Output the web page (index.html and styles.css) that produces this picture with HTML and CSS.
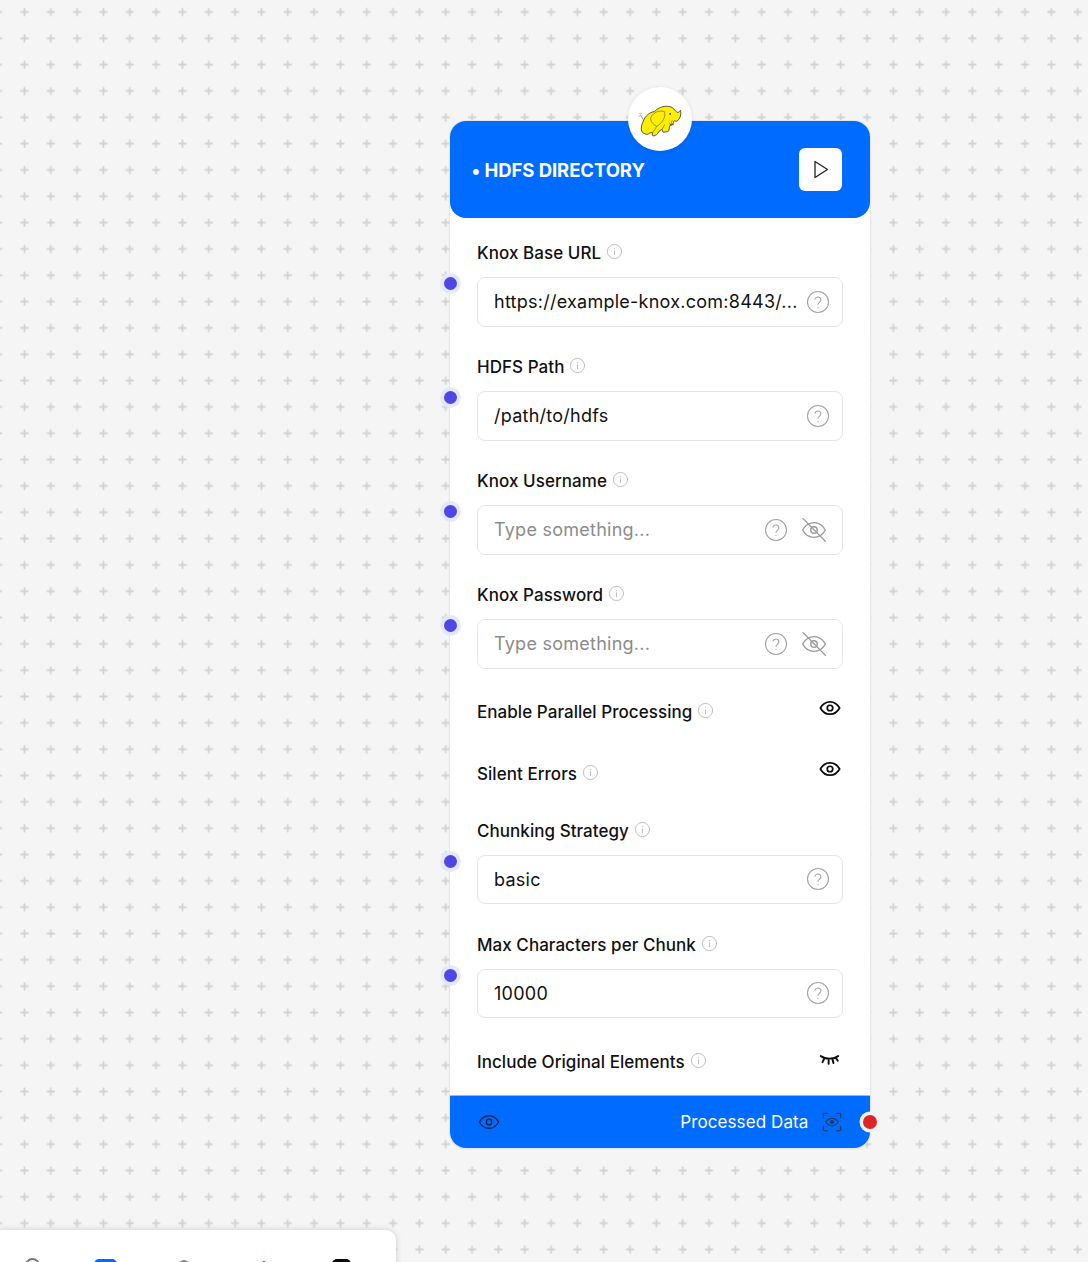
FILE: index.html
```html
<!DOCTYPE html>
<html lang="en">
<head>
<meta charset="utf-8">
<title>HDFS Directory</title>
<link rel="stylesheet" href="styles.css">
</head>
<body>
<svg class="defs" width="0" height="0" aria-hidden="true">
  <defs>
    <symbol id="i-info" viewBox="0 0 24 24"><circle cx="12" cy="12" r="10"/><path d="M12 16.500v-5.500"/><path d="M12 7.600v.2"/></symbol>
    <symbol id="i-help" viewBox="0 0 24 24"><circle cx="12" cy="12" r="10.500"/><path d="M9 9.200a3 3 0 0 1 5.900.9c0 2-2.900 2.500-2.900 4.200"/><path d="M12 17.600v.2"/></symbol>
    <symbol id="i-eye" viewBox="0 0 24 24"><path d="M1.500 12C4 7.500 7.600 5.200 12 5.200S20 7.500 22.500 12C20 16.500 16.400 18.800 12 18.800S4 16.500 1.500 12Z"/><circle cx="12" cy="12" r="3"/></symbol>
    <symbol id="i-eye-off" viewBox="0 0 24 24"><path d="M1.500 12C4 7.500 7.600 5.200 12 5.200S20 7.500 22.500 12C20 16.500 16.400 18.800 12 18.800S4 16.500 1.500 12Z"/><circle cx="12" cy="12" r="3"/><path d="M2 1.500 22.500 22.500"/></symbol>
    <symbol id="i-lash" viewBox="0 0 24 24"><path d="M2 8c5 4 15 4 20 0"/><path d="M6 11l-2 4"/><path d="M11 12.500V17"/><path d="M15.500 12l1 4"/><path d="M19.500 10.500l2 3"/></symbol>
    <symbol id="i-scan" viewBox="0 0 24 24"><path d="M1.500 7V3.500a2 2 0 0 1 2-2H7"/><path d="M17 1.500h3.500a2 2 0 0 1 2 2V7"/><path d="M22.500 17v3.500a2 2 0 0 1-2 2H17"/><path d="M7 22.500H3.500a2 2 0 0 1-2-2V17"/><path d="M4.500 12C6.500 9 9 7.500 12 7.500S17.500 9 19.500 12C17.500 15 15 16.500 12 16.500S6.500 15 4.500 12Z"/><circle class="fill-dark" cx="12" cy="12" r="1.800"/></symbol>
    <pattern id="plus" width="26.33" height="26.33" patternUnits="userSpaceOnUse" x="11.300" y="-1.200">
      <path class="plus-mark" d="M13.170 9.200v8M9.170 13.200h8"/>
    </pattern>
  </defs>
</svg>

<main class="canvas">
  <svg class="dots" width="1088" height="1262" aria-hidden="true"><rect width="1088" height="1262" fill="url(#plus)"/></svg>

  <article class="node">
    <div class="logo">
      <svg class="elephant" viewBox="85 65 130 100" aria-hidden="true">
        <path class="el-tail" d="M103 118C99 112 96 106 92 100M92 97l-3-1M95 96l-1-3M90 103l-3 1"/>
        <path class="el-body" d="M100 120C106 102 120 92 134 90C146 76 170 70 186 78C192 82 198 93 203 93C207 93 207 87 211 87C213 99 210 111 201 118C197 120 194 116 191 118C191 124 187 130 180 131C176 136 178 143 176 147C172 151 165 150 161 151C157 152 158 145 156 143C152 145 148 147 146 150C143 158 137 160 132 162C127 163 126 158 128 153C122 151 118 154 115 157C110 159 103 155 100 153C93 149 93 134 100 120Z"/>
        <path class="el-line" d="M122 112C124 96 146 84 163 90C168 104 158 124 140 134C134 130 124 124 122 112Z"/>
        <path class="el-line" d="M180 131C184 126 184 121 186 116M128 153C132 147 136 142 140 134M156 143C158 138 162 134 164 128"/>
        <path class="el-mouth" d="M178 126C182 130 188 131 191 127"/>
        <circle class="el-eye" cx="180" cy="97" r="2.500"/>
      </svg>
    </div>

    <header class="node-head">
      <h1 class="node-title">• HDFS DIRECTORY</h1>
      <button class="run-btn" type="button" aria-label="Run">
        <svg class="run-icon" viewBox="0 0 16 19"><path d="M2 1.500 14.500 9.500 2 17.500Z"/></svg>
      </button>
    </header>

    <div class="node-body">
      <section class="field">
        <span class="handle"></span>
        <div class="label-row"><span>Knox Base URL</span><svg class="info"><use href="#i-info"/></svg></div>
        <div class="input"><span class="value">https://example-knox.com:8443/...</span><svg class="help"><use href="#i-help"/></svg></div>
      </section>
      <section class="field">
        <span class="handle"></span>
        <div class="label-row"><span>HDFS Path</span><svg class="info"><use href="#i-info"/></svg></div>
        <div class="input"><span class="value">/path/to/hdfs</span><svg class="help"><use href="#i-help"/></svg></div>
      </section>
      <section class="field">
        <span class="handle"></span>
        <div class="label-row"><span>Knox Username</span><svg class="info"><use href="#i-info"/></svg></div>
        <div class="input"><span class="value placeholder">Type something...</span><svg class="help"><use href="#i-help"/></svg><svg class="reveal"><use href="#i-eye-off"/></svg></div>
      </section>
      <section class="field">
        <span class="handle"></span>
        <div class="label-row"><span>Knox Password</span><svg class="info"><use href="#i-info"/></svg></div>
        <div class="input"><span class="value placeholder">Type something...</span><svg class="help"><use href="#i-help"/></svg><svg class="reveal"><use href="#i-eye-off"/></svg></div>
      </section>

      <section class="toggle toggle-first">
        <div class="label-row"><span>Enable Parallel Processing</span><svg class="info"><use href="#i-info"/></svg></div>
        <svg class="toggle-eye"><use href="#i-eye"/></svg>
      </section>
      <section class="toggle toggle-second">
        <div class="label-row"><span>Silent Errors</span><svg class="info"><use href="#i-info"/></svg></div>
        <svg class="toggle-eye"><use href="#i-eye"/></svg>
      </section>

      <section class="field field-after-toggle">
        <span class="handle"></span>
        <div class="label-row"><span>Chunking Strategy</span><svg class="info"><use href="#i-info"/></svg></div>
        <div class="input"><span class="value">basic</span><svg class="help"><use href="#i-help"/></svg></div>
      </section>
      <section class="field">
        <span class="handle"></span>
        <div class="label-row"><span>Max Characters per Chunk</span><svg class="info"><use href="#i-info"/></svg></div>
        <div class="input"><span class="value">10000</span><svg class="help"><use href="#i-help"/></svg></div>
      </section>

      <section class="toggle toggle-last">
        <div class="label-row"><span>Include Original Elements</span><svg class="info"><use href="#i-info"/></svg></div>
        <svg class="toggle-lash"><use href="#i-lash"/></svg>
      </section>
    </div>

    <footer class="node-foot">
      <svg class="foot-eye"><use href="#i-eye"/></svg>
      <span class="foot-label">Processed Data</span>
      <svg class="foot-scan"><use href="#i-scan"/></svg>
      <span class="handle-out"></span>
    </footer>
  </article>

  <nav class="toolbar" aria-label="Tools">
    <span class="tool tool-ring"></span>
    <span class="tool tool-blue"></span>
    <span class="tool tool-grey"></span>
    <span class="tool tool-dot"></span>
    <span class="tool tool-black"></span>
  </nav>
</main>
</body>
</html>
```

FILE: styles.css
```css
* { box-sizing: border-box; }
html, body { margin: 0; padding: 0; }
body {
  width: 1088px;
  height: 1262px;
  overflow: hidden;
  background: #f5f5f5;
  font-family: Inter, "Liberation Sans", sans-serif;
  color: #111;
}
.defs { position: absolute; }
.canvas { position: relative; width: 1088px; height: 1262px; overflow: hidden; }
.dots { position: absolute; left: 0; top: 0; }
.plus-mark { fill: none; stroke: #d2d2d2; stroke-width: 1.800; }

symbol { overflow: visible; }
svg use { fill: none; stroke: currentColor; stroke-linecap: round; stroke-linejoin: round; }

.node {
  position: absolute;
  left: 450px;
  top: 120.500px;
  width: 419.500px;
  height: 1027.500px;
  display: flex;
  flex-direction: column;
  background: #fff;
  border-radius: 16px;
  box-shadow: 0 0 0 1px #e6e6e6, 0 1px 3px rgba(0,0,0,.08);
}
.logo {
  position: absolute;
  left: 178px;
  top: -33.500px;
  width: 64px;
  height: 64px;
  border-radius: 50%;
  background: #fff;
  box-shadow: 0 1px 4px rgba(0,0,0,.12);
  display: flex;
  align-items: center;
  justify-content: center;
  z-index: 2;
}
.elephant { width: 44px; height: 34px; margin-top: 2px; }
.el-body { fill: #ffee00; stroke: #222; stroke-width: 2.200; stroke-linejoin: round; }
.el-line { fill: none; stroke: #444; stroke-width: 1.600; }
.el-mouth { fill: none; stroke: #222; stroke-width: 2; }
.el-tail { fill: none; stroke: #777; stroke-width: 2; }
.el-eye { fill: #222; }

.node-head {
  height: 97.500px;
  flex: none;
  background: #006cff;
  border-radius: 16px;
  display: flex;
  align-items: center;
  justify-content: space-between;
  padding: 0 27.500px 0 21.500px;
}
.node-title { margin: 1px 0 0; font-size: 18.500px; line-height: 24px; font-weight: 700; color: #fff; letter-spacing: -0.070px; }
.run-btn {
  width: 43px;
  height: 43px;
  padding: 0;
  border: 0;
  border-radius: 6px;
  background: #fff;
  display: flex;
  align-items: center;
  justify-content: center;
}
.run-icon { width: 16px; height: 19px; fill: none; stroke: #222; stroke-width: 1.300; stroke-linejoin: round; }

.node-body { flex: 1; padding: 23px 26.500px 0 27px; }
.field { position: relative; margin-bottom: 28.500px; }
.field-after-toggle { margin-top: 33px; }
.handle {
  position: absolute;
  left: -33px;
  top: 36px;
  width: 13px;
  height: 13px;
  border-radius: 50%;
  background: #4f46e5;
  box-shadow: 0 0 0 4px #e3e8ff;
  z-index: 1;
}
.label-row {
  display: flex;
  align-items: center;
  gap: 5px;
  height: 24px;
  font-size: 17px;
  font-weight: 500;
  letter-spacing: 0.050px;
  white-space: nowrap;
}
.field .label-row { margin-bottom: 12px; }
.info { width: 17px; height: 17px; color: #b4b4b4; margin-top: -3px; }
.info use { stroke-width: 1.200; }

.input {
  height: 49.500px;
  display: flex;
  align-items: center;
  padding: 0 12px 0 16px;
  border: 1px solid #e5e5e5;
  border-radius: 8px;
  background: #fff;
  font-size: 18px;
}
.value { flex: 1; min-width: 0; white-space: nowrap; letter-spacing: 0.250px; }
.placeholder { color: #8c8c8c; }
.help { width: 24px; height: 24px; flex: none; color: #a3a3a3; }
.help use { stroke-width: 1.100; }
.reveal { width: 26px; height: 26px; flex: none; color: #9a9a9a; margin: 0 3px 0 13px; }
.reveal use { stroke-width: 1.300; }

.toggle {
  display: flex;
  align-items: center;
  justify-content: space-between;
  height: 24px;
  position: relative;
}
.toggle-first { margin-top: 31px; }
.toggle-second { margin-top: 38px; }
.toggle-last { margin-top: 31.500px; }
.toggle-eye { width: 22px; height: 22px; color: #0d0d0d; margin: -8px 2px 0 0; }
.toggle-second .toggle-eye { margin-top: -10px; }
.toggle-eye use { stroke-width: 1.900; }
.toggle-lash { width: 21px; height: 21px; color: #0d0d0d; margin: -4px 3px 0 0; }
.toggle-lash use { stroke-width: 2.200; }

.node-foot {
  height: 53px;
  flex: none;
  position: relative;
  background: #006cff;
  border-top: 1px solid #8cbcff;
  border-radius: 0 0 16px 16px;
  display: flex;
  align-items: center;
  padding: 0 28px 1px 28px;
  color: #fff;
}
.foot-eye { width: 22px; height: 22px; color: #10224a; }
.foot-eye use { stroke-width: 1.500; }
.foot-label { margin-left: auto; font-size: 17px; font-weight: 400; letter-spacing: 0.100px; }
.foot-scan { width: 20px; height: 20px; color: #24385f; margin-left: 13px; }
.foot-scan use { stroke-width: 1.500; }
.fill-dark { fill: currentColor; }
.handle-out {
  position: absolute;
  right: -7px;
  top: 18.500px;
  width: 14px;
  height: 14px;
  border-radius: 50%;
  background: #dc2626;
  box-shadow: 0 0 0 3.500px #eef1f6;
}

.toolbar {
  position: absolute;
  left: -8px;
  top: 1230px;
  width: 404px;
  height: 80px;
  background: #fff;
  border-radius: 10px;
  box-shadow: 0 0 6px rgba(0,0,0,.16);
  display: grid;
  grid-template-columns: 78px 69px 88px 71px 85px;
  align-items: start;
  justify-items: center;
  padding-left: 1px;
}
.tool { display: block; }
.tool-ring { width: 15px; height: 15px; margin-top: 28px; border: 2px solid #777; border-radius: 50%; }
.tool-blue { width: 23px; height: 16px; margin-top: 29px; background: #006cff; border-radius: 5px; }
.tool-grey { width: 12px; height: 12px; margin-top: 30px; background: #8a8a8a; border-radius: 50%; }
.tool-dot { width: 2px; height: 4px; margin-top: 31px; background: #006cff; }
.tool-black { width: 19px; height: 16px; margin-top: 29px; background: #0b0b0b; border-radius: 5px; }
```
